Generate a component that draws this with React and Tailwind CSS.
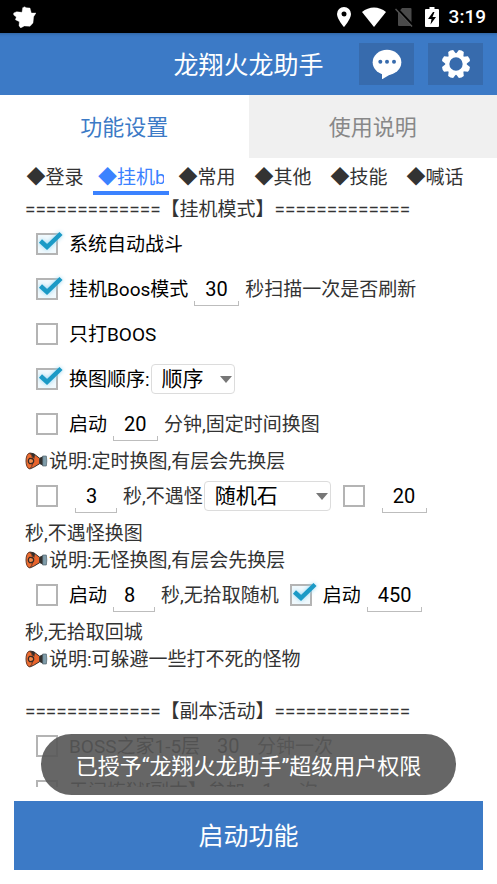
import { useState } from 'react'

const subTabs = ['登录', '挂机b', '常用', '其他', '技能', '喊话']
const gearTeeth = [22.5, 67.5, 112.5, 157.5, 202.5, 247.5, 292.5, 337.5]
const rule = '============='

function StatusBar() {
  return (
    <div className="flex h-[33px] shrink-0 items-center justify-between bg-black pr-[11px] pl-[13px] text-white">
      <svg width="23" height="22" viewBox="39 15 69 66" fill="#fff" aria-hidden="true">
        <path d="M41 36 50 32 66 34 68 20 75 17 78 20 90 21 94 36 108 36 101 47 99 66 90 76 73 75 62 81 57 74 58 62 46 56 49 48 41 42Z" strokeLinejoin="round" stroke="#fff" strokeWidth="1" />
      </svg>
      <div className="flex items-center">
        <svg className="mr-[11px]" width="14" height="20" viewBox="0 0 14 20" aria-hidden="true">
          <path fillRule="evenodd" fill="#fff" d="M7 0a7 7 0 0 0-7 7c0 5 7 13 7 13s7-8 7-13a7 7 0 0 0-7-7Zm0 4.500a2.500 2.500 0 1 1 0 5 2.500 2.500 0 0 1 0-5Z" />
        </svg>
        <svg className="mr-[9px]" width="24" height="20" viewBox="0 0 24 20" aria-hidden="true">
          <path fill="#fff" d="M0 5C7-1 17-1 24 5L12 20Z" />
        </svg>
        <svg className="mr-3" width="18" height="20" viewBox="0 0 18 20" aria-hidden="true">
          <path fill="#4a4a4a" d="M7 1h8.500a1 1 0 0 1 1 1v16a1 1 0 0 1-1 1H4a1 1 0 0 1-1-1V6Z" />
          <path d="M1.500 1.500 18 19" stroke="#000" strokeWidth="3" />
          <path d="M.5 2 17 19.500" stroke="#555" strokeWidth="1.500" />
        </svg>
        <svg className="mr-[10px]" width="14" height="20" viewBox="0 0 14 20" aria-hidden="true">
          <path fill="#fff" d="M4.500 0h5v2H13a1 1 0 0 1 1 1v16a1 1 0 0 1-1 1H1a1 1 0 0 1-1-1V3a1 1 0 0 1 1-1h3.500Z" />
          <path fill="#000" d="M8 5 3 12h3.500L5.500 17.500 11 10H7.500L9.500 5Z" />
        </svg>
        <span className="text-[19px] leading-6 font-medium">3:19</span>
      </div>
    </div>
  )
}

function Header() {
  return (
    <header className="grid h-[62px] shrink-0 grid-cols-[1fr_auto_1fr] items-center bg-[#3c7ac6] px-[14px] shadow-[inset_0_4px_3px_-3px_#2f629e]">
      <span />
      <h1 className="pt-[3px] text-[25px] leading-8 text-white">龙翔火龙助手</h1>
      <div className="flex justify-end gap-[14px]">
        <button type="button" aria-label="消息" className="flex h-[42px] w-[55px] items-center justify-center bg-[#376bad]">
          <svg width="30" height="30" viewBox="0 0 90 90" aria-hidden="true">
            <ellipse cx="45" cy="40" rx="43" ry="38" fill="#fff" />
            <path d="M30 70v21L58 74Z" fill="#fff" />
            <circle cx="25" cy="38" r="6" fill="#376bad" />
            <circle cx="45" cy="38" r="6" fill="#376bad" />
            <circle cx="66" cy="38" r="6" fill="#376bad" />
          </svg>
        </button>
        <button type="button" aria-label="设置" className="flex h-[42px] w-[55px] items-center justify-center bg-[#376bad]">
          <svg width="28" height="28" viewBox="-42 -42 84 84" aria-hidden="true">
            {gearTeeth.map((deg) => (
              <path key={deg} d="M-12-28-8-42Q0-45 8-42L12-28Z" fill="#fff" transform={`rotate(${deg})`} />
            ))}
            <circle r="26" fill="none" stroke="#fff" strokeWidth="12" />
          </svg>
        </button>
      </div>
    </header>
  )
}

function Text({ children }) {
  return <span className="pt-[3px]">{children}</span>
}

function Check({ children, label, defaultChecked }) {
  return (
    <label className="relative ml-[11px] flex items-center gap-[11px] text-black">
      <input
        type="checkbox"
        aria-label={label}
        defaultChecked={defaultChecked}
        className="peer size-[22px] shrink-0 appearance-none border-2 border-[#b4b4b4] bg-white checked:bg-[#f0f9fd]"
      />
      <svg
        className="pointer-events-none absolute top-1/2 left-0 hidden -translate-y-1/2 drop-shadow-[0_0_2px_#8fd3f0] peer-checked:block"
        width="28"
        height="28"
        viewBox="0 0 28 28"
        aria-hidden="true"
      >
        <path d="M4.500 11 11 17 25 3.500" fill="none" stroke="#1b9ac6" strokeWidth="4.500" />
      </svg>
      <Text>{children}</Text>
    </label>
  )
}

const fieldWidths = { 1: 'w-[42px]', 2: 'w-[45px]', 3: 'w-[55px]' }

function NumberField({ value, label }) {
  return (
    <span className="relative mx-[6px] block h-[34px]">
      <input
        type="text"
        inputMode="numeric"
        aria-label={label}
        defaultValue={value}
        className={`block h-[34px] bg-transparent pl-[11px] text-[20px] text-black outline-none ${fieldWidths[value.length]}`}
      />
      <span className="pointer-events-none absolute inset-x-0 bottom-0 h-[5px] border-x border-b border-[#bdbdbd]" />
    </span>
  )
}

function Dropdown({ label, options, className }) {
  return (
    <span className={`relative mx-px block ${className}`}>
      <select
        aria-label={label}
        className="block h-[30px] w-full appearance-none rounded-sm border border-[#dcdcdc] bg-white pl-[10px] text-[21px] leading-7 text-black outline-none"
      >
        {options.map((o) => (
          <option key={o}>{o}</option>
        ))}
      </select>
      <svg className="pointer-events-none absolute top-3 right-[3px]" width="12" height="7" viewBox="0 0 12 7" aria-hidden="true">
        <path d="M0 0h12L6 7Z" fill="#777" />
      </svg>
    </span>
  )
}

function Row({ children }) {
  return <div className="flex h-[45px] items-center pb-[2px] whitespace-nowrap">{children}</div>
}

function Megaphone() {
  return (
    <svg className="shrink-0" width="23" height="18" viewBox="0 0 69 54" aria-hidden="true">
      <path d="M14 3 26 5 44 19V35L26 46 14 51Z" fill="#e8642c" stroke="#33302e" strokeWidth="3" />
      <path d="M14 3 30 7 28 20 20 12Z" fill="#33302e" />
      <ellipse cx="13" cy="27" rx="10" ry="23" fill="#ee6d30" stroke="#6b3a27" strokeWidth="3" />
      <path d="M14 19q12-1 12 8t-12 8q-4-3-4-8t4-8Z" fill="#f08a4c" stroke="#3a2a26" strokeWidth="4" />
      <path d="M44 17 54 13V41L44 36Z" fill="#33302e" />
      <path d="M53 12h11q3 15 0 30H53Z" fill="#7f9daa" stroke="#4c5d66" strokeWidth="2" />
    </svg>
  )
}

function Line({ children }) {
  return <p className="h-[27px] pt-px leading-[27px]">{children}</p>
}

function Note({ children }) {
  return (
    <p className="flex h-[27px] items-center gap-px whitespace-nowrap">
      <Megaphone />
      <Text>{children}</Text>
    </p>
  )
}

function Divider({ title }) {
  return <h2 className="h-[27px] pt-px leading-[27px] whitespace-nowrap">{`${rule}【${title}】${rule}`}</h2>
}

export default function App() {
  const [tab, setTab] = useState(0)
  const [subTab, setSubTab] = useState(1)

  return (
    <div className="relative flex h-screen flex-col overflow-hidden bg-white font-[Roboto,'Noto_Sans_CJK_SC',sans-serif] text-[19px] text-[#333]">
      <StatusBar />
      <Header />

      <nav className="grid h-[63px] shrink-0 grid-cols-2 text-[22px]">
        {['功能设置', '使用说明'].map((name, i) => (
          <button
            key={name}
            type="button"
            onClick={() => setTab(i)}
            className={`pt-[2px] ${tab === i ? 'bg-white text-[#3c7ac6]' : 'bg-[#f0f0f0] text-[#888]'}`}
          >
            {name}
          </button>
        ))}
      </nav>

      <nav className="flex h-[37px] shrink-0 px-[17px]">
        {subTabs.map((name, i) => (
          <button
            key={name}
            type="button"
            onClick={() => setSubTab(i)}
            className={`w-[76px] shrink-0 border-b-4 px-[5px] pt-[6px] ${
              subTab === i ? 'border-[#3b82ff] text-[#3b82ff]' : 'border-transparent'
            }`}
          >
            <span className="block overflow-hidden leading-[27px] whitespace-nowrap">◆{name}</span>
          </button>
        ))}
      </nav>

      <main className="min-h-0 flex-1 overflow-hidden px-[25px]">
        <Divider title="挂机模式" />
        <Row>
          <Check defaultChecked>系统自动战斗</Check>
        </Row>
        <Row>
          <Check defaultChecked>挂机Boos模式</Check>
          <NumberField value="30" label="扫描间隔" />
          <Text>秒扫描一次是否刷新</Text>
        </Row>
        <Row>
          <Check>只打BOOS</Check>
        </Row>
        <Row>
          <Check defaultChecked>换图顺序:</Check>
          <Dropdown label="换图顺序" options={['顺序']} className="w-[84px]" />
        </Row>
        <Row>
          <Check>启动</Check>
          <NumberField value="20" label="固定换图时间" />
          <Text>分钟,固定时间换图</Text>
        </Row>
        <Note>说明:定时换图,有层会先换层</Note>
        <Row>
          <Check label="不遇怪使用道具" />
          <NumberField value="3" label="不遇怪秒数" />
          <Text>秒,不遇怪</Text>
          <Dropdown label="道具" options={['随机石']} className="w-[127px]" />
          <Check label="不遇怪换图" />
          <NumberField value="20" label="不遇怪换图秒数" />
        </Row>
        <Line>秒,不遇怪换图</Line>
        <Note>说明:无怪换图,有层会先换层</Note>
        <Row>
          <Check>启动</Check>
          <NumberField value="8" label="无拾取随机秒数" />
          <Text>秒,无拾取随机</Text>
          <Check defaultChecked>启动</Check>
          <NumberField value="450" label="无拾取回城秒数" />
        </Row>
        <Line>秒,无拾取回城</Line>
        <Note>说明:可躲避一些打不死的怪物</Note>
        <div className="mt-[25px]">
          <Divider title="副本活动" />
        </div>
        <Row>
          <Check>BOSS之家1-5层</Check>
          <NumberField value="30" label="BOSS之家间隔" />
          <Text>分钟一次</Text>
        </Row>
        <Row>
          <Check>无间炼狱[副本】参加</Check>
          <NumberField value="1" label="参加次数" />
          <Text>次</Text>
        </Row>
      </main>

      <footer className="shrink-0 p-[14px]">
        <button type="button" className="h-[69px] w-full bg-[#3c7ac6] pt-[3px] text-[25px] text-white">
          启动功能
        </button>
      </footer>

      {/* Toast */}
      <div className="pointer-events-none absolute inset-x-0 bottom-[89px] flex justify-center">
        <div role="status" className="rounded-full bg-[#595959]/92 px-[35px] pt-4 pb-3 text-[22px] leading-[33px] whitespace-nowrap text-white">
          已授予“龙翔火龙助手”超级用户权限
        </div>
      </div>
    </div>
  )
}
